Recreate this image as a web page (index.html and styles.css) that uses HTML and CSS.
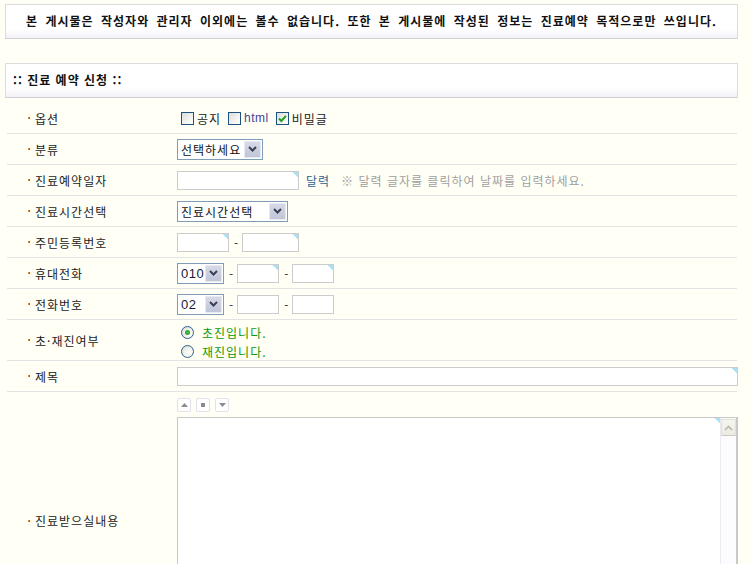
FILE: index.html
```html
<!DOCTYPE html>
<html lang="ko">
<head>
<meta charset="utf-8">
<title>진료 예약 신청</title>
<link rel="stylesheet" href="styles.css">
</head>
<body>
<div class="notice">본 게시물은 작성자와 관리자 이외에는 볼수 없습니다. 또한 본 게시물에 작성된 정보는 진료예약 목적으로만 쓰입니다.</div>

<div class="section">:: 진료 예약 신청 ::</div>

<div class="rows">
  <div class="row">
    <div class="label"><span class="dot"></span>옵션</div>
    <div class="field">
      <span class="chk"></span><span class="opt">공지</span>
      <span class="chk"></span><span class="opt html">html</span>
      <span class="chk on"><svg viewBox="0 0 11 11" width="11" height="11"><path d="M2 5.5 L4.3 8 L9 2.8" fill="none" stroke="#21a121" stroke-width="2"/></svg></span><span class="opt">비밀글</span>
    </div>
  </div>

  <div class="row">
    <div class="label"><span class="dot"></span>분류</div>
    <div class="field">
      <span class="select w86"><span class="sel-text">선택하세요</span><span class="arrow"><svg viewBox="0 0 9 6" width="9" height="6"><path d="M1 1 L4.5 4.5 L8 1" fill="none" stroke="#3a3f55" stroke-width="2"/></svg></span></span>
    </div>
  </div>

  <div class="row">
    <div class="label"><span class="dot"></span>진료예약일자</div>
    <div class="field">
      <input class="txt corner w122" type="text">
      <span class="cal">달력</span>
      <span class="hint">※ 달력 글자를 클릭하여 날짜를 입력하세요.</span>
    </div>
  </div>

  <div class="row">
    <div class="label"><span class="dot"></span>진료시간선택</div>
    <div class="field">
      <span class="select w111"><span class="sel-text">진료시간선택</span><span class="arrow"><svg viewBox="0 0 9 6" width="9" height="6"><path d="M1 1 L4.5 4.5 L8 1" fill="none" stroke="#3a3f55" stroke-width="2"/></svg></span></span>
    </div>
  </div>

  <div class="row">
    <div class="label"><span class="dot"></span>주민등록번호</div>
    <div class="field">
      <input class="txt corner w52" type="text"><span class="dash">-</span><input class="txt corner w57" type="text">
    </div>
  </div>

  <div class="row">
    <div class="label"><span class="dot"></span>휴대전화</div>
    <div class="field">
      <span class="select w47"><span class="sel-text num">010</span><span class="arrow"><svg viewBox="0 0 9 6" width="9" height="6"><path d="M1 1 L4.5 4.5 L8 1" fill="none" stroke="#3a3f55" stroke-width="2"/></svg></span></span><span class="dash">-</span><input class="txt corner w42" type="text"><span class="dash">-</span><input class="txt corner w42" type="text">
    </div>
  </div>

  <div class="row">
    <div class="label"><span class="dot"></span>전화번호</div>
    <div class="field">
      <span class="select w47"><span class="sel-text num">02</span><span class="arrow"><svg viewBox="0 0 9 6" width="9" height="6"><path d="M1 1 L4.5 4.5 L8 1" fill="none" stroke="#3a3f55" stroke-width="2"/></svg></span></span><span class="dash">-</span><input class="txt w42" type="text"><span class="dash">-</span><input class="txt w42" type="text">
    </div>
  </div>

  <div class="row tall">
    <div class="label"><span class="dot"></span>초·재진여부</div>
    <div class="field radios">
      <div class="radio-line"><span class="radio on"></span><span class="green">초진입니다.</span></div>
      <div class="radio-line"><span class="radio"></span><span class="green">재진입니다.</span></div>
    </div>
  </div>

  <div class="row">
    <div class="label"><span class="dot"></span>제목</div>
    <div class="field">
      <input class="txt corner wfull" type="text">
    </div>
  </div>

  <div class="row content">
    <div class="label"><span class="dot"></span>진료받으실내용</div>
    <div class="field editor">
      <div class="tools">
        <span class="tbtn"><svg viewBox="0 0 7 4" width="7" height="4"><path d="M0 4 L3.5 0 L7 4 Z" fill="#8a8a90"/></svg></span>
        <span class="tbtn"><span class="sq"></span></span>
        <span class="tbtn"><svg viewBox="0 0 7 4" width="7" height="4"><path d="M0 0 L7 0 L3.5 4 Z" fill="#8a8a90"/></svg></span>
      </div>
      <div class="area">
        <div class="area-body"></div>
        <div class="scroll">
          <span class="sbtn"><svg viewBox="0 0 9 6" width="9" height="6"><path d="M1 5 L4.5 1.5 L8 5" fill="none" stroke="#b9b9b0" stroke-width="1.6"/></svg></span>
        </div>
      </div>
    </div>
  </div>
</div>
</body>
</html>
```

FILE: styles.css
```css
* { box-sizing: border-box; }

body {
  margin: 0;
  background: #fffff5;
  font-family: "Noto Sans CJK KR", "Noto Sans", sans-serif;
  font-size: 12px;
  letter-spacing: 1px;
  color: #222;
}

.notice,
.section {
  width: 733px;
  height: 35px;
  margin-left: 5px;
  border: 1px solid #dcdcdc;
  border-bottom-color: #cfcfd4;
  background: linear-gradient(to bottom, #ffffff 0, #ffffff 72%, #f3f1f7 100%);
  font-weight: bold;
  color: #111;
  line-height: 31px;
}

.notice {
  margin-top: 4px;
  text-align: center;
  word-spacing: 3px;
}

.section {
  margin-top: 24px;
  padding-left: 7px;
}

.rows {
  width: 730px;
  margin: 5px 0 0 7px;
}

.row {
  display: grid;
  grid-template-columns: 170px 1fr;
  align-items: center;
  min-height: 31px;
  border-bottom: 1px solid #e3e3e3;
}

.row.tall { min-height: 41px; }

.label {
  display: flex;
  align-items: center;
  padding-left: 21px;
  color: #222;
}

.dot {
  width: 2px;
  height: 2px;
  margin-right: 5px;
  background: linear-gradient(90deg, #e0903a 50%, #3f70b0 50%);
}

.field {
  display: flex;
  align-items: center;
}

/* checkboxes */
.chk {
  display: inline-flex;
  align-items: center;
  justify-content: center;
  width: 13px;
  height: 13px;
  margin-left: 4px;
  border: 1px solid #1c5180;
  background: linear-gradient(135deg, #dcdcd7 0%, #f6f6f4 70%, #ffffff 100%);
}

.opt {
  margin-left: 3px;
  margin-right: 3px;
}

.opt.html {
  font-family: "Liberation Sans", Arial, sans-serif;
  letter-spacing: 0.5px;
  color: #3f4199;
}

/* select */
.select {
  display: inline-flex;
  align-items: stretch;
  height: 21px;
  border: 1px solid #7f9db9;
  background: #fff;
}

.sel-text {
  flex: 1;
  padding-left: 3px;
  line-height: 19px;
  color: #111;
  white-space: nowrap;
  overflow: hidden;
}

.sel-text.num {
  font-family: "Liberation Sans", Arial, sans-serif;
  font-size: 13px;
  letter-spacing: 0.5px;
  color: #1a1a40;
}

.arrow {
  display: flex;
  align-items: center;
  justify-content: center;
  width: 17px;
  margin: 1px;
  border: 1px solid #e8eaf2;
  background: linear-gradient(to bottom, #d6d9e7, #c0c5d8);
}

.w86 { width: 86px; }
.w111 { width: 111px; }
.w47 { width: 47px; }
.w122 { width: 122px; }
.w52 { width: 52px; }
.w57 { width: 57px; }
.w42 { width: 42px; }
.wfull { width: 561px; }

/* text inputs */
.txt {
  height: 19px;
  margin: 0;
  padding: 0 2px;
  border: 1px solid #cccccc;
  background: #ffffff;
  font: inherit;
  outline: none;
}

.txt.corner {
  background: linear-gradient(225deg, #a9e2f7 0, #a9e2f7 4px, #ffffff 4px);
}

.dash {
  margin: 0 3px 0 5px;
  color: #333;
}

.cal {
  margin-left: 7px;
  color: #2f6191;
}

.hint {
  margin-left: 11px;
  color: #a0a0a0;
}

/* radios */
.radios {
  flex-direction: column;
  align-items: flex-start;
  gap: 2px;
  padding-top: 3px;
}

.radio-line {
  display: flex;
  align-items: center;
  height: 17px;
}

.radio {
  display: inline-flex;
  align-items: center;
  justify-content: center;
  width: 13px;
  height: 13px;
  margin-left: 4px;
  margin-right: 8px;
  border: 1px solid #2f5f8f;
  border-radius: 50%;
  background: radial-gradient(circle at 65% 65%, #ffffff 0, #f2f2ee 40%, #d8d8d2 100%);
}

.radio.on::after {
  content: "";
  width: 5px;
  height: 5px;
  border-radius: 50%;
  background: radial-gradient(circle, #4cc04c 0, #1f8f1f 100%);
}

.green { color: #0d9a0d; }

/* content editor */
.editor {
  flex-direction: column;
  align-items: flex-start;
  padding: 6px 0 10px;
}

.tools {
  display: flex;
  gap: 5px;
}

.tbtn {
  display: inline-flex;
  align-items: center;
  justify-content: center;
  width: 14px;
  height: 14px;
  border: 1px solid #e2e0ea;
  border-radius: 2px;
  background: #ffffff;
}

.sq {
  width: 4px;
  height: 4px;
  background: #8a8a90;
}

.area {
  display: flex;
  width: 561px;
  height: 222px;
  margin-top: 5px;
  border: 1px solid #c8c8c8;
  border-right-width: 2px;
  background: #fff;
}

.area-body {
  flex: 1;
  background: linear-gradient(225deg, #a9e2f7 0, #a9e2f7 4px, #ffffff 4px);
}

.scroll {
  width: 16px;
  border-left: 1px solid #ece9f2;
  background: #fcfbfe;
}

.sbtn {
  display: flex;
  align-items: center;
  justify-content: center;
  width: 15px;
  height: 17px;
  margin-top: 1px;
  border: 1px solid #e2e2da;
  border-bottom-color: #c9c9bd;
  background: linear-gradient(to bottom, #f6f6f0, #ebebe2);
}
```
